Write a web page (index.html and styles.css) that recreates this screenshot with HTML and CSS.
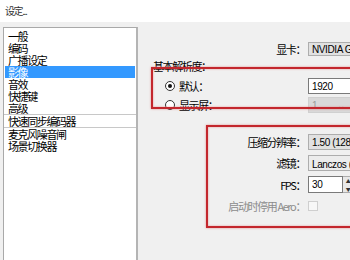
FILE: index.html
```html
<!DOCTYPE html>
<html>
	<head lang="zh">
		<meta charset="UTF-8">
		<title>设定</title>
		<link rel="stylesheet" href="styles.css">
	</head>
	<body>
		<div class="window">
			<div class="titlebar">设定...</div>
			<div class="main">
				<ul class="nav">
					<li>一般</li>
					<li>编码</li>
					<li>广播设定</li>
					<li class="active">影像</li>
					<li>音效</li>
					<li>快捷键</li>
					<li>高级</li>
					<li class="sep">快速同步编码器</li>
					<li>麦克风噪音闸</li>
					<li>场景切换器</li>
				</ul>
				<div class="panel">
					<div class="row row-gpu">
						<span class="lbl">显卡：</span>
						<div class="combo"><span>NVIDIA GeForce GTX 960</span></div>
					</div>
					<div class="group-title">基本解析度：</div>
					<div class="row row-def">
						<span class="radio"><i class="dot on"></i>默认：</span>
						<div class="edit">1920</div>
					</div>
					<div class="row row-mon">
						<span class="radio"><i class="dot"></i>显示屏：</span>
						<div class="combo disabled"><span>1</span><b class="caret">⌄</b></div>
					</div>
					<div class="row row-scale">
						<span class="lbl">压缩分辨率：</span>
						<div class="combo"><span>1.50 (1280x720)</span></div>
					</div>
					<div class="row row-filter">
						<span class="lbl">滤镜：</span>
						<div class="combo light"><span>Lanczos (锐利)</span></div>
					</div>
					<div class="row row-fps">
						<span class="lbl">FPS：</span>
						<div class="spin">
							<div class="edit">30</div>
							<div class="spin-btns"><i>▲</i><i>▼</i></div>
						</div>
					</div>
					<div class="row row-aero">
						<span class="lbl grey">启动时停用 Aero：</span>
						<div><i class="check"></i></div>
					</div>

					<div class="mark mark-res"></div>
					<div class="mark mark-out"></div>
				</div>
			</div>
		</div>
	</body>
</html>
```

FILE: styles.css
```css
* {
	margin: 0;
	padding: 0;
	box-sizing: border-box;
}

body {
	width: 350px;
	height: 260px;
	overflow: hidden;
	background: #f0f0f0;
	font-family: "Noto Sans CJK SC", "Liberation Sans", sans-serif;
	font-size: 11px;
	letter-spacing: -1.4px;
	color: #000;
}

.window {
	height: 260px;
	display: flex;
	flex-direction: column;
}

.titlebar {
	height: 22px;
	line-height: 22px;
	padding-left: 5px;
	background: #fff;
	color: #333;
	font-size: 10px;
}

.main {
	flex: 1;
	display: flex;
	overflow: hidden;
}

/* left list */
.nav {
	list-style: none;
	width: 135px;
	margin: 5px 0 0 3px;
	height: 260px;
	background: #fff;
	border: 1px solid #a9a9a9;
	border-right: 2px solid #b4b4b4;
	padding-top: 2px;
}

.nav li {
	height: 12px;
	line-height: 12px;
	margin: 0 1px;
	padding-left: 3px;
	white-space: nowrap;
}

.nav li.active {
	background: #3399ff;
	color: #fff;
}

.nav li.sep {
	height: 14px;
	line-height: 13px;
	margin: 0;
	padding-left: 4px;
	border-top: 1px solid #c8c8c8;
	border-bottom: 1px solid #c8c8c8;
}

/* right panel */
.panel {
	position: relative;
	flex: 1;
	margin-left: 2px;
	padding-top: 20px;
	overflow: hidden;
}

.row {
	display: grid;
	grid-template-columns: 165px 130px;
	column-gap: 3px;
	align-items: center;
	height: 16px;
}

.lbl {
	text-align: right;
	white-space: nowrap;
	line-height: 12px;
}

.lbl.grey {
	color: #8c8c8c;
}

.row-gpu { height: 14px; }
.row-def { margin-top: 6px; }
.row-mon { margin-top: 3px; }
.row-scale { margin-top: 21px; }
.row-filter { margin-top: 5px; }
.row-fps { margin-top: 5px; height: 17px; }
.row-aero { margin-top: 7px; height: 12px; }

.group-title {
	margin: 4px 0 0 13px;
	line-height: 12px;
	height: 12px;
}

.radio {
	display: flex;
	align-items: center;
	padding-left: 25px;
	line-height: 12px;
}

.dot {
	display: inline-block;
	width: 10px;
	height: 10px;
	border: 1px solid #333;
	border-radius: 50%;
	margin-right: 4px;
	background: #fff;
	position: relative;
}

.dot.on::after {
	content: "";
	position: absolute;
	left: 2px;
	top: 2px;
	width: 4px;
	height: 4px;
	border-radius: 50%;
	background: #111;
}

.combo, .edit {
	height: 100%;
	border: 1px solid #adadad;
	background: #e1e1e1;
	font-family: "Liberation Sans", "Noto Sans CJK SC", sans-serif;
	font-size: 10px;
	letter-spacing: -0.4px;
	padding-left: 3px;
	display: flex;
	align-items: center;
	white-space: nowrap;
	overflow: hidden;
}

.combo.light {
	background: #ececec;
}

.combo.disabled {
	background: #d9d9d9;
	border-color: #d0d0d0;
	color: #9a9a9a;
}

.caret {
	margin-left: 20px;
	font-weight: normal;
	color: #aaa;
}

.edit {
	background: #fff;
	border-color: #7a7a7a;
}

.spin {
	display: flex;
	height: 100%;
}

.spin .edit {
	width: 35px;
}

.spin-btns {
	display: flex;
	flex-direction: column;
	width: 10px;
	border: 1px solid #adadad;
	border-left: none;
	background: #e8e8e8;
}

.spin-btns i {
	flex: 1;
	font-style: normal;
	font-size: 5px;
	line-height: 7px;
	text-align: center;
	color: #333;
}

.check {
	display: block;
	width: 10px;
	height: 10px;
	border: 1px solid #cfcfcf;
	background: #f7f7f7;
}

/* red annotation boxes */
.mark {
	position: absolute;
	border: 2px solid #c3272d;
	border-right: none;
	box-shadow: 0 0 2px rgba(220, 80, 80, 0.6), inset 0 0 2px rgba(220, 80, 80, 0.6);
	width: 260px;
}

.mark-res {
	left: 11px;
	top: 45px;
	height: 42px;
}

.mark-out {
	left: 66px;
	top: 103px;
	height: 103px;
}
```
